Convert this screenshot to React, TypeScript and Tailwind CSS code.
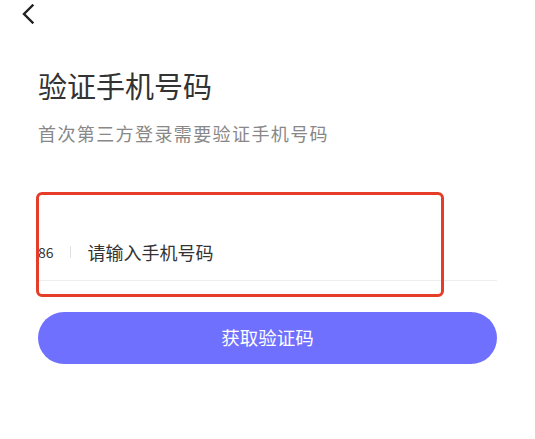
import React from "react";

export default function App() {
  return (
    <div
      className="relative w-[535px] h-[439px] bg-white overflow-hidden"
      style={{ fontFamily: '"Noto Sans CJK SC", "Noto Sans", sans-serif' }}
    >
      <div className="h-[28px] pl-[21px] pt-[4px]">
        <svg width="14" height="20" viewBox="0 0 14 20" fill="none">
          <path d="M11.5 1.5 L3 10 L11.5 18.5" stroke="#222" strokeWidth="2.4" strokeLinecap="square" strokeLinejoin="miter" />
        </svg>
      </div>
      <div className="px-[38px]">
        <h1 className="mt-[37px] text-[29px] leading-[40px] text-[#333] font-normal">验证手机号码</h1>
        <p className="mt-[14px] text-[18px] leading-[28px] text-[#888] tracking-[1.4px]">首次第三方登录需要验证手机号码</p>
        <div className="mt-[77px] h-[57px] flex items-center border-b border-[#eeeeee]">
          <span className="text-[14px] text-[#333]">86</span>
          <span className="ml-[16px] w-px h-[12px] bg-[#e0e0e0]" />
          <span className="ml-[17px] text-[18px] text-[#333]">请输入手机号码</span>
        </div>
        <button className="mt-[31px] w-full h-[52px] rounded-full bg-[#7070ff] text-white text-[18.5px] flex items-center justify-center">
          获取验证码
        </button>
      </div>
      <div className="absolute left-[36px] top-[192px] w-[408px] h-[105px] border-[3px] border-[#e63d28] rounded-[6px]" />
    </div>
  );
}
